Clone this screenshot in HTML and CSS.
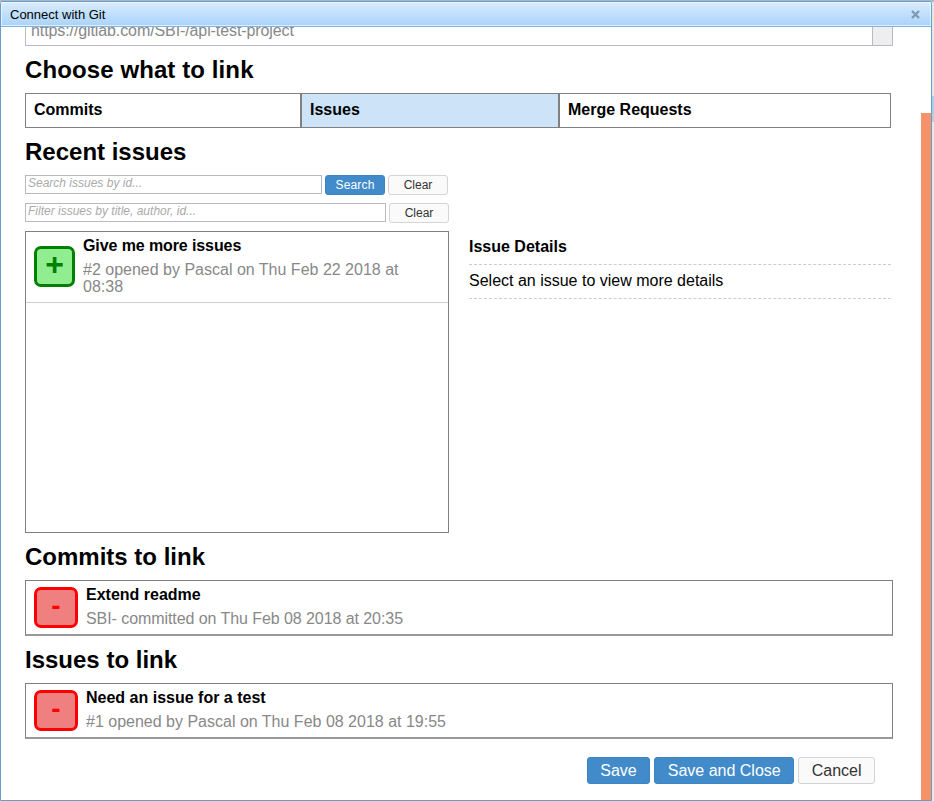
FILE: index.html
```html
<!DOCTYPE html>
<html lang="en">
<head>
    <meta charset="UTF-8">
    <meta name="viewport" content="width=device-width, initial-scale=1.0">
    <title>Connect with Git</title>
    <link rel="stylesheet" href="styles.css">
</head>
<body>

    <div class="backdrop"></div>
    <div class="backdrop-thumb"></div>

    <div class="dialog">
        <div class="titlebar">
            <span class="dialog-title">Connect with Git</span>
            <svg class="dialog-close" width="9" height="9" viewBox="0 0 9 9">
                <path d="M1 1 L8 8 M8 1 L1 8" stroke="#7f97ae" stroke-width="2.2" fill="none"/>
            </svg>
        </div>

        <div class="dialog-body">
            <div class="url-row">
                <input class="url-input" type="text" value="https://gitlab.com/SBI-/api-test-project" readonly>
                <span class="url-addon"></span>
            </div>

            <h2 class="choose-title">Choose what to link</h2>
            <div class="tabs">
                <div class="tab tab-commits">Commits</div>
                <div class="tab tab-issues active">Issues</div>
                <div class="tab tab-merge">Merge Requests</div>
            </div>

            <h2 class="recent-title">Recent issues</h2>
            <div class="search-row">
                <input class="search-input id-input" type="text" placeholder="Search issues by id...">
                <button class="btn btn-primary btn-small">Search</button>
                <button class="btn btn-small">Clear</button>
            </div>
            <div class="search-row filter-row">
                <input class="search-input filter-input" type="text" placeholder="Filter issues by title, author, id...">
                <button class="btn btn-small">Clear</button>
            </div>

            <div class="browser">
                <div class="issue-list">
                    <div class="item item-recent">
                        <span class="toggle toggle-add">+</span>
                        <div class="item-text">
                            <div class="item-title">Give me more issues</div>
                            <div class="item-meta">#2 opened by Pascal on Thu Feb 22 2018 at 08:38</div>
                        </div>
                    </div>
                </div>
                <div class="details">
                    <div class="details-title">Issue Details</div>
                    <div class="details-text">Select an issue to view more details</div>
                </div>
            </div>

            <h2 class="link-title">Commits to link</h2>
            <div class="link-box">
                <div class="item">
                    <span class="toggle toggle-remove">-</span>
                    <div class="item-text">
                        <div class="item-title">Extend readme</div>
                        <div class="item-meta commit-meta">SBI- committed on Thu Feb 08 2018 at 20:35</div>
                    </div>
                </div>
            </div>

            <h2 class="link-title">Issues to link</h2>
            <div class="link-box">
                <div class="item">
                    <span class="toggle toggle-remove">-</span>
                    <div class="item-text">
                        <div class="item-title">Need an issue for a test</div>
                        <div class="item-meta">#1 opened by Pascal on Thu Feb 08 2018 at 19:55</div>
                    </div>
                </div>
            </div>

            <div class="actions">
                <button class="btn btn-primary">Save</button>
                <button class="btn btn-primary">Save and Close</button>
                <button class="btn">Cancel</button>
            </div>
        </div>

        <div class="side-bar"></div>
    </div>

</body>
</html>
```

FILE: styles.css
```css
html, body {
    margin: 0;
    height: 100%;
    overflow: hidden;
}

body {
    font-family: "Liberation Sans", Arial, sans-serif;
    background: #e8e8e8;
    color: #000;
}

/* page behind the dialog */
.backdrop {
    position: absolute;
    top: 0;
    left: 0;
    right: 0;
    height: 2px;
    background: #a9b6c4;
}

.backdrop-thumb {
    position: absolute;
    top: 96px;
    right: 0;
    width: 2px;
    height: 26px;
    background: #b4cde6;
}

/* Dialog window */
.dialog {
    position: absolute;
    top: 1px;
    left: 0;
    width: 932px;
    height: 800px;
    box-sizing: border-box;
    background: #fff;
    border: 1px solid #6a9cc6;
    border-radius: 3px 3px 0 0;
    overflow: hidden;
}

.titlebar {
    display: flex;
    justify-content: space-between;
    align-items: center;
    height: 25px;
    box-sizing: border-box;
    padding: 0 11px 0 9px;
    background: linear-gradient(to bottom, #d8ecfe, #a9d3fb);
    border-bottom: 1px solid #7fb4e0;
    box-shadow: inset 0 0 0 1px rgba(255, 255, 255, 0.6);
    position: relative;
    z-index: 1;
}

.dialog-title {
    font-size: 13px;
}

.dialog-body {
    padding: 0 38px 0 24px;
    height: 773px;
    overflow: hidden;
}

/* URL field, scrolled partly out of view */
.url-row {
    display: flex;
    height: 32px;
    margin-top: -13px;
    border: 1px solid #b5bac4;
    box-sizing: border-box;
    width: 868px;
}

.url-input {
    flex: 1;
    border: 0;
    padding: 2px 5px 0;
    font: 16px "Liberation Sans", Arial, sans-serif;
    letter-spacing: -0.1px;
    color: #888;
    outline: none;
}

.url-addon {
    width: 19px;
    background: #eee;
    border-left: 1px solid #b5bac4;
}

h2 {
    font-size: 24px;
    line-height: 28px;
    font-weight: bold;
    margin: 0;
}

.choose-title {
    margin-top: 10px;
    letter-spacing: 0.1px;
}

/* Tabs */
.tabs {
    display: flex;
    width: 866px;
    height: 35px;
    margin-top: 9px;
    box-sizing: border-box;
    border: 1px solid #808080;
}

.tab {
    box-sizing: border-box;
    padding-left: 8px;
    font-size: 16px;
    font-weight: bold;
    line-height: 32px;
}

.tab-commits {
    width: 274px;
}

.tab-issues {
    width: 260px;
    border-left: 2px solid #808080;
    border-right: 2px solid #808080;
}

.tab-merge {
    flex: 1;
}

.tab.active {
    background: #cde3f8;
}

.recent-title {
    margin-top: 10px;
}

/* Search rows */
.search-row {
    display: flex;
    align-items: flex-start;
    gap: 3px;
    margin-top: 9px;
}

.filter-row {
    margin-top: 8px;
}

.search-input {
    height: 19px;
    box-sizing: border-box;
    border: 1px solid #b5bac4;
    padding: 0 2px 3px;
    font: 12px "Liberation Sans", Arial, sans-serif;
    outline: none;
}

.search-input::placeholder {
    color: #aaa;
    font-style: italic;
    opacity: 1;
}

.id-input {
    width: 297px;
}

.filter-input {
    width: 361px;
}

.btn {
    box-sizing: border-box;
    height: 27px;
    padding: 0 12.5px;
    font: 16px "Liberation Sans", Arial, sans-serif;
    color: #333;
    background: #fafafa;
    border: 1px solid #d4d4d4;
    border-radius: 3px;
}

.btn-primary {
    color: #fff;
    background: #428bca;
    border-color: #3d85c2;
}

.btn-small {
    width: 60px;
    height: 20px;
    padding: 0;
    font-size: 12px;
}

.btn-primary.btn-small {
    letter-spacing: 0.15px;
}

/* Issue browser */
.browser {
    display: flex;
    margin-top: 8px;
    height: 302px;
}

.issue-list {
    width: 424px;
    box-sizing: border-box;
    border: 1px solid #808080;
}

.item {
    display: flex;
    align-items: center;
    padding: 0 8px;
}

.item-recent {
    border-bottom: 1px solid #ccc;
    height: 71px;
    box-sizing: border-box;
}

.toggle {
    flex: none;
    display: flex;
    align-items: center;
    justify-content: center;
    height: 41px;
    box-sizing: border-box;
    border: 3px solid;
    border-radius: 7px;
    padding-bottom: 4px;
    font-size: 28px;
    font-weight: bold;
}

.toggle-add {
    width: 41px;
    margin-bottom: 2px;
    font-size: 32px;
    background: #90ee90;
    border-color: #008000;
    color: #008000;
}

.toggle-remove {
    width: 44px;
    background: #f08080;
    border-color: #f00;
    color: #f00;
}

.item-text {
    margin-left: 8px;
    margin-bottom: 2px;
    min-width: 0;
}

.item-title {
    font-size: 16px;
    font-weight: bold;
    line-height: 18px;
}

.item-recent .item-title {
    letter-spacing: -0.1px;
}

.item-meta {
    font-size: 16px;
    line-height: 17px;
    color: #888;
    margin-top: 6px;
}

.commit-meta {
    letter-spacing: -0.07px;
}

.details {
    width: 422px;
    margin-left: 20px;
    font-size: 16px;
}

.details-title {
    font-weight: bold;
    padding-top: 7px;
    height: 34px;
    line-height: 18px;
    box-sizing: border-box;
    border-bottom: 1px dashed #ccc;
}

.details-text {
    height: 34px;
    line-height: 32px;
    box-sizing: border-box;
    border-bottom: 1px dashed #ccc;
}

.link-title {
    margin-top: 10px;
}

.link-box {
    width: 868px;
    height: 56px;
    margin-top: 9px;
    box-sizing: border-box;
    border: 1px solid #808080;
    border-bottom-width: 2px;
    border-bottom-color: #999;
}

.link-box .item {
    height: 53px;
}

/* Footer buttons */
.actions {
    display: flex;
    justify-content: flex-end;
    gap: 4px;
    width: 850px;
    margin-top: 18px;
}

/* Orange strip down the right edge */
.side-bar {
    position: absolute;
    top: 111px;
    right: 0;
    bottom: 0;
    width: 10px;
    background: #f4936a;
}
```
